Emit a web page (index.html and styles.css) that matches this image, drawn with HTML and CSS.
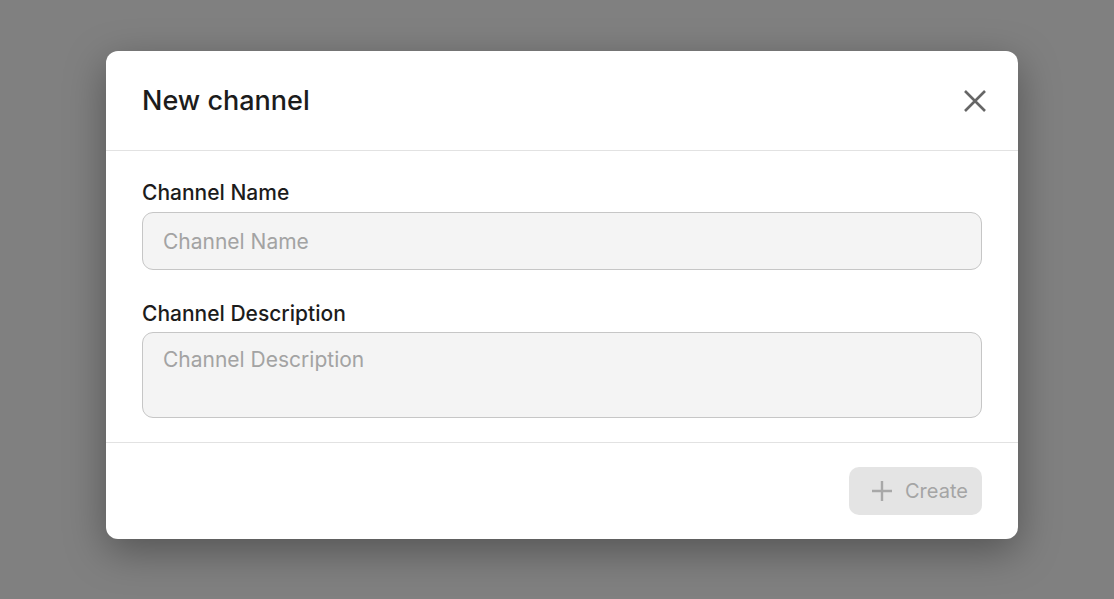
FILE: index.html
```html
<!DOCTYPE html>
<html lang="en">
<head>
  <meta charset="UTF-8">
  <meta name="viewport" content="width=device-width, initial-scale=1.0">
  <title>New channel</title>
  <link rel="stylesheet" href="styles.css">
</head>
<body>
  <div class="overlay">
    <div class="modal">
      <div class="modal-header">
        <h2>New channel</h2>
        <button class="close" aria-label="Close">
          <svg width="24" height="24" viewBox="0 0 24 24" fill="none" stroke="#666" stroke-width="2.6">
            <path d="M2 2 L22 22 M22 2 L2 22" />
          </svg>
        </button>
      </div>

      <div class="modal-body">
        <div class="form-group">
          <label for="channelName">Channel Name</label>
          <input type="text" id="channelName" placeholder="Channel Name" />
        </div>
        <div class="form-group">
          <label for="channelDesc">Channel Description</label>
          <textarea id="channelDesc" placeholder="Channel Description"></textarea>
        </div>
      </div>

      <div class="modal-footer">
        <button class="create" disabled>
          <svg width="22" height="22" viewBox="0 0 22 22" fill="none" stroke="#a8a8a8" stroke-width="2.4">
            <path d="M11 1 V21 M1 11 H21" />
          </svg>
          Create
        </button>
      </div>
    </div>
  </div>
</body>
</html>
```

FILE: styles.css
```css
html, body {
  margin: 0;
  height: 100%;
}
body {
  font-family: Inter, "Noto Sans", sans-serif;
  background-color: #808080;
}
.overlay {
  display: flex;
  justify-content: center;
  padding: 51px 0 0 10px;
}
.modal {
  width: 912px;
  background-color: #fff;
  border-radius: 12px;
  box-shadow: 0 12px 40px rgba(0, 0, 0, 0.35);
}
.modal-header {
  display: flex;
  align-items: center;
  justify-content: space-between;
  height: 99px;
  padding: 0 31px 0 36px;
  border-bottom: 1px solid #e2e2e2;
}
.modal-header h2 {
  margin: 0;
  font-size: 27px;
  font-weight: 500;
  color: #1c1c1c;
}
.close {
  background: none;
  border: none;
  padding: 0;
  width: 24px;
  height: 24px;
  cursor: pointer;
}
.close svg {
  display: block;
}
.modal-body {
  padding: 29px 36px 24px;
  display: flex;
  flex-direction: column;
  gap: 31px;
}
label {
  display: block;
  margin-bottom: 7px;
  font-size: 21px;
  line-height: 25px;
  font-weight: 500;
  color: #1c1c1c;
}
.form-group + .form-group label {
  margin-bottom: 6px;
}
input, textarea {
  display: block;
  width: 100%;
  box-sizing: border-box;
  font-family: inherit;
  font-size: 21px;
  color: #333;
  background-color: #f4f4f4;
  border: 1px solid #c6c6c6;
  border-radius: 11px;
  padding: 0 20px;
  outline: none;
}
input {
  height: 58px;
}
textarea {
  height: 86px;
  padding-top: 14px;
  resize: none;
}
input::placeholder, textarea::placeholder {
  color: #a3a3a3;
}
.modal-footer {
  display: flex;
  justify-content: flex-end;
  padding: 24px 36px;
  border-top: 1px solid #e2e2e2;
}
.create {
  display: flex;
  align-items: center;
  gap: 12px;
  height: 48px;
  width: 133px;
  padding: 0 0 0 22px;
  box-sizing: border-box;
  font-family: inherit;
  font-size: 20px;
  color: #a5a5a5;
  background-color: #e4e4e4;
  border: none;
  border-radius: 10px;
}
```
